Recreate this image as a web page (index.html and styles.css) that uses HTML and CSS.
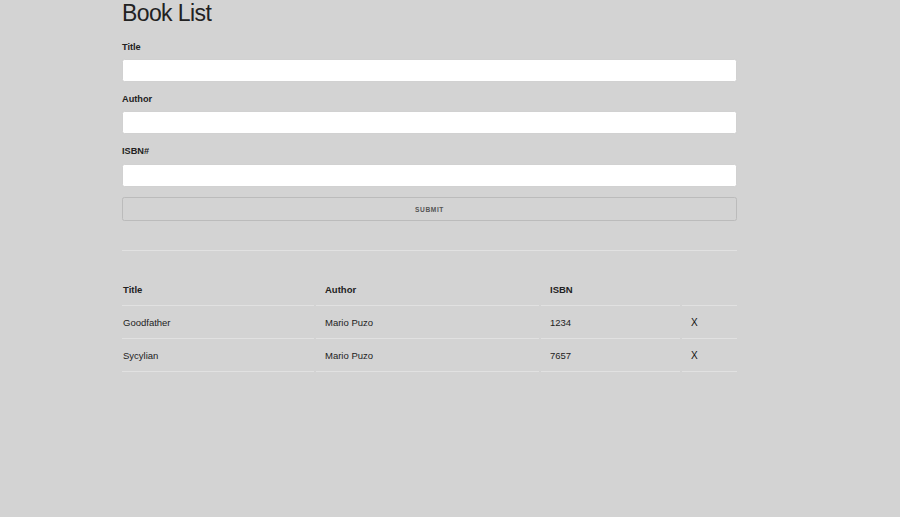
FILE: index.html
```html
<!DOCTYPE html>
<html lang="en">
<head>
<meta charset="utf-8">
<title>Book List</title>
<link rel="stylesheet" href="styles.css">
</head>
<body>
<div class="container">
  <h1 class="page-title">Book List</h1>
  <form class="book-form">
    <label class="field-label" for="title">Title</label>
    <input class="field-input" type="text" id="title">
    <label class="field-label" for="author">Author</label>
    <input class="field-input" type="text" id="author">
    <label class="field-label" for="isbn">ISBN#</label>
    <input class="field-input" type="text" id="isbn">
    <button class="submit-btn" type="submit">Submit</button>
  </form>
  <hr class="divider">
  <table class="book-table">
    <colgroup>
      <col class="col-title">
      <col class="col-author">
      <col class="col-isbn">
      <col class="col-del">
    </colgroup>
    <thead>
      <tr><th>Title</th><th>Author</th><th>ISBN</th><th></th></tr>
    </thead>
    <tbody>
      <tr><td>Goodfather</td><td>Mario Puzo</td><td>1234</td><td><a class="delete" href="#">X</a></td></tr>
      <tr><td>Sycylian</td><td>Mario Puzo</td><td>7657</td><td><a class="delete" href="#">X</a></td></tr>
    </tbody>
  </table>
</div>
</body>
</html>
```
FILE: styles.css
```css
html, body {
  margin: 0;
  padding: 0;
  background: #d3d3d3;
}
body {
  font-family: "Liberation Sans", Arial, Helvetica, sans-serif;
  font-size: 9px;
  line-height: 1.6;
  color: #222;
}
.container {
  width: 615px;
  margin-left: 122px;
}
.page-title {
  font-size: 23px;
  line-height: 28px;
  font-weight: 300;
  letter-spacing: -0.6px;
  margin: -1px 0 12.6px;
}
.book-form {
  margin: 0;
}
.field-label {
  display: block;
  font-weight: 700;
  font-size: 9.2px;
  line-height: 14.4px;
  margin-bottom: 5px;
}
.field-input {
  display: block;
  box-sizing: border-box;
  width: 100%;
  height: 23px;
  padding: 3.6px 6px;
  background: #fff;
  border: 1px solid #d1d1d1;
  border-radius: 2.4px;
  margin: 0 0 10px;
  font: inherit;
  outline: none;
}
.submit-btn {
  display: block;
  box-sizing: border-box;
  width: 100%;
  height: 24px;
  padding: 0 18px;
  margin: 0;
  background: transparent;
  border: 1px solid #bbb;
  border-radius: 2.4px;
  color: #555;
  font-family: inherit;
  font-size: 6.6px;
  font-weight: 700;
  letter-spacing: 0.6px;
  line-height: 24px;
  text-transform: uppercase;
  text-align: center;
}
.divider {
  border: 0;
  border-top: 1px solid #e1e1e1;
  margin: 29px 0 22px;
  height: 0;
}
.book-table {
  table-layout: fixed;
  border-collapse: separate;
  border-spacing: 2px;
  width: 619px;
  margin-left: -2px;
}
.col-title { width: 192px; }
.col-author { width: 223px; }
.col-isbn { width: 139px; }
.col-del { width: 55px; }
.book-table th,
.book-table td {
  text-align: left;
  padding: 7px 9px;
  line-height: 16px;
  font-size: 9.5px;
  border-bottom: 1px solid #e1e1e1;
}
.book-table th {
  font-weight: 700;
}
.book-table th:first-child,
.book-table td:first-child {
  padding-left: 1px;
}
.book-table th:last-child,
.book-table td:last-child {
  padding-right: 0;
}
.delete {
  color: #111;
  text-decoration: none;
  font-size: 10px;
}
```
